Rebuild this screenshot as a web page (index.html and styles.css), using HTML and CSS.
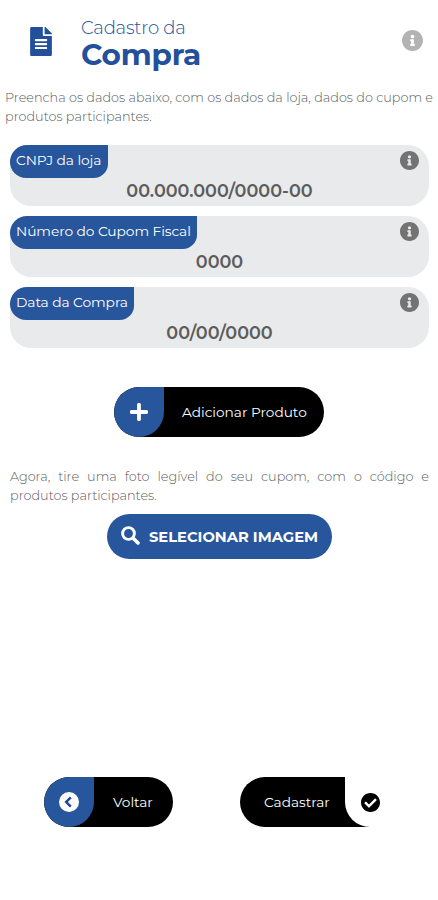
FILE: index.html
```html
<!DOCTYPE html>
<html lang="pt-BR">
<head>
    <meta charset="UTF-8">
    <meta name="viewport" content="width=device-width, initial-scale=1.0">
    <title>Cadastro da Compra</title>
    <link rel="stylesheet" href="styles.css">
</head>
<body>
    <svg class="defs" width="0" height="0">
        <symbol id="info" viewBox="8 8 496 496">
            <path d="M256 8C119.043 8 8 119.083 8 256c0 136.997 111.043 248 248 248s248-111.003 248-248C504 119.083 392.957 8 256 8zm0 110c23.196 0 42 18.804 42 42s-18.804 42-42 42-42-18.804-42-42 18.804-42 42-42zm56 254c0 6.627-5.373 12-12 12h-88c-6.627 0-12-5.373-12-12v-24c0-6.627 5.373-12 12-12h12v-64h-12c-6.627 0-12-5.373-12-12v-24c0-6.627 5.373-12 12-12h64c6.627 0 12 5.373 12 12v100h12c6.627 0 12 5.373 12 12v24z"/>
        </symbol>
    </svg>

    <header class="topo">
        <svg class="icone-doc" viewBox="0 0 384 512"><path d="M224 136V0H24C10.7 0 0 10.7 0 24v464c0 13.3 10.7 24 24 24h336c13.3 0 24-10.7 24-24V160H248c-13.2 0-24-10.8-24-24zm76 243c0 6-5 11-12 11H96c-7 0-12-5-12-11v-14c0-6 5-11 12-11h192c7 0 12 5 12 11zm0-70c0 6-5 11-12 11H96c-7 0-12-5-12-11v-14c0-6 5-11 12-11h192c7 0 12 5 12 11zm0-84v14c0 6-5 11-12 11H96c-7 0-12-5-12-11v-14c0-6 5-11 12-11h192c7 0 12 5 12 11zM384 121.900v6.100H256V0h6.100c6.400 0 12.500 2.500 17 7l97.900 98c4.500 4.500 7 10.600 7 16.900z"/></svg>
        <h1><span class="sub">Cadastro da</span><span class="titulo">Compra</span></h1>
        <svg class="info info-topo"><use href="#info"/></svg>
    </header>

    <p class="texto intro"><span>Preencha os dados abaixo, com os dados da loja, dados do cupom e</span> <span class="ultima">produtos participantes.</span></p>

    <main>
        <div class="campo">
            <div class="linha"><span class="rotulo r-cnpj">CNPJ da loja</span><svg class="info"><use href="#info"/></svg></div>
            <div class="valor">00.000.000/0000-00</div>
        </div>
        <div class="campo">
            <div class="linha"><span class="rotulo r-cupom">Número do Cupom Fiscal</span><svg class="info"><use href="#info"/></svg></div>
            <div class="valor">0000</div>
        </div>
        <div class="campo">
            <div class="linha"><span class="rotulo r-data">Data da Compra</span><svg class="info"><use href="#info"/></svg></div>
            <div class="valor">00/00/0000</div>
        </div>

        <button class="botao adicionar">
            <span class="bolha"><svg width="18" height="18" viewBox="0 0 18 18"><path d="M9 1.700v14.600M1.700 9h14.600" stroke="#fff" stroke-width="3.800" stroke-linecap="round"/></svg></span>
            <span class="nome">Adicionar Produto</span>
        </button>

        <p class="texto foto"><span>Agora, tire uma foto legível do seu cupom, com o código e</span> <span class="ultima">produtos participantes.</span></p>

        <button class="selecionar">
            <svg width="19" height="19" viewBox="0 0 19 19" fill="none" stroke="#fff"><circle cx="7.500" cy="7.500" r="5.900" stroke-width="2.900"/><path d="M12.200 12.200l4.800 4.800" stroke-width="3.500" stroke-linecap="round"/></svg>
            <span>SELECIONAR IMAGEM</span>
        </button>
    </main>

    <footer>
        <button class="botao voltar">
            <span class="bolha"><svg width="20" height="20" viewBox="0 0 20 20"><circle cx="10" cy="10" r="10" fill="#fff"/><path d="M11.800 5.300L7.200 10l4.600 4.700" fill="none" stroke="#23468f" stroke-width="2.500"/></svg></span>
            <span class="nome">Voltar</span>
        </button>
        <button class="botao cadastrar">
            <span class="nome">Cadastrar</span>
            <span class="bolha branca"><svg width="19" height="19" viewBox="8 8 496 496"><path d="M504 256c0 136.967-111.033 248-248 248S8 392.967 8 256 119.033 8 256 8s248 111.033 248 248zM227.314 387.314l184-184c6.248-6.248 6.248-16.379 0-22.627l-22.627-22.627c-6.248-6.249-16.379-6.249-22.628 0L216 308.118l-70.059-70.059c-6.248-6.248-16.379-6.248-22.628 0l-22.627 22.627c-6.248 6.248-6.248 16.379 0 22.627l104 104c6.249 6.249 16.379 6.249 22.628.001z"/></svg></span>
        </button>
    </footer>
</body>
</html>
```
FILE: styles.css
```css
* {
    box-sizing: border-box;
}

body {
    margin: 0;
    height: 900px;
    display: flex;
    flex-direction: column;
    background: #fff;
    font-family: Montserrat, Inter, sans-serif;
    color: #5c5c5c;
    overflow: hidden;
}

.defs {
    display: none;
}

/* cabeçalho */
.topo {
    display: flex;
    height: 88px;
    padding: 16px 15px 0 30px;
}

.icone-doc {
    width: 22px;
    height: 29px;
    margin-top: 11px;
    fill: #22509b;
}

h1 {
    margin: 0 0 0 29px;
    flex: 1;
    color: #22509b;
    white-space: nowrap;
}

h1 span {
    display: block;
}

.sub {
    font-size: 18px;
    line-height: 22px;
    font-weight: 300;
    padding-top: 1px;
    letter-spacing: -0.2px;
}

.titulo {
    font-size: 29.5px;
    line-height: 31px;
    font-weight: 700;
    letter-spacing: -0.2px;
}

.info {
    width: 19px;
    height: 19px;
    fill: #737373;
}

.info-topo {
    width: 21px;
    height: 21px;
    margin-top: 14px;
    fill: #b3b3b3;
}

.texto {
    margin: 0;
    font-size: 12.8px;
    line-height: 19px;
    font-weight: 300;
}

.texto span {
    display: block;
    text-align-last: justify;
    white-space: nowrap;
}

.texto .ultima {
    text-align-last: left;
}

.intro {
    padding: 0 5px;
}

/* campos */
main {
    padding: 19px 9px 0 10px;
    display: flex;
    flex-direction: column;
    align-items: center;
}

.campo {
    width: 100%;
    height: 61px;
    margin-bottom: 10px;
    background: #e8eaeb;
    border-radius: 21px;
}

.linha {
    display: flex;
    justify-content: space-between;
    height: 33px;
    padding-right: 10px;
}

.linha .info {
    margin-top: 6px;
}

.rotulo {
    padding-left: 6px;
    background: #28569d;
    color: #fff;
    font-size: 13.8px;
    line-height: 31px;
    letter-spacing: -0.08px;
    border-radius: 19px 0 16px 18px;
    white-space: nowrap;
}

.r-cnpj {
    width: 98px;
}

.r-cupom {
    width: 187px;
}

.r-data {
    width: 124px;
}

.valor {
    text-align: center;
    font-size: 17.6px;
    line-height: 25px;
    font-weight: 600;
}

/* botões */
button {
    border: 0;
    padding: 0;
    font-family: inherit;
    color: #fff;
    white-space: nowrap;
}

.botao {
    display: flex;
    height: 50px;
    background: #000;
    border-radius: 25px;
    overflow: hidden;
    font-size: 13.7px;
    line-height: 50px;
}

.bolha {
    width: 50px;
    height: 50px;
    flex: none;
    display: flex;
    align-items: center;
    justify-content: center;
    background: #28569d;
    border-radius: 25px 0 25px 25px;
}

.nome {
    flex: 1;
    text-align: left;
}

.adicionar {
    width: 210px;
    margin-top: 29px;
    margin-right: 1px;
}

.adicionar .nome {
    padding-left: 18px;
}

.foto {
    margin-top: 30px;
    width: 100%;
}

.selecionar {
    display: flex;
    align-items: center;
    width: 225px;
    height: 45px;
    margin-top: 9px;
    padding-left: 14px;
    gap: 9px;
    background: #28569d;
    border-radius: 23px;
    font-size: 14.7px;
    font-weight: 700;
}

.selecionar svg {
    margin-top: -3px;
}

footer {
    margin-top: auto;
    margin-bottom: 73px;
    padding: 0 43px 0 44px;
    display: flex;
    justify-content: space-between;
}

.voltar {
    width: 129px;
}

.voltar .nome {
    padding-left: 19px;
}

.cadastrar {
    width: 155px;
    background: linear-gradient(to right, #000 130px, #fff 130px);
    box-shadow: 0 0 1px #f3f3f3;
}

.cadastrar .nome {
    padding-left: 24px;
}

.branca {
    background: #fff;
    border-radius: 0 25px 25px 25px;
}
```
